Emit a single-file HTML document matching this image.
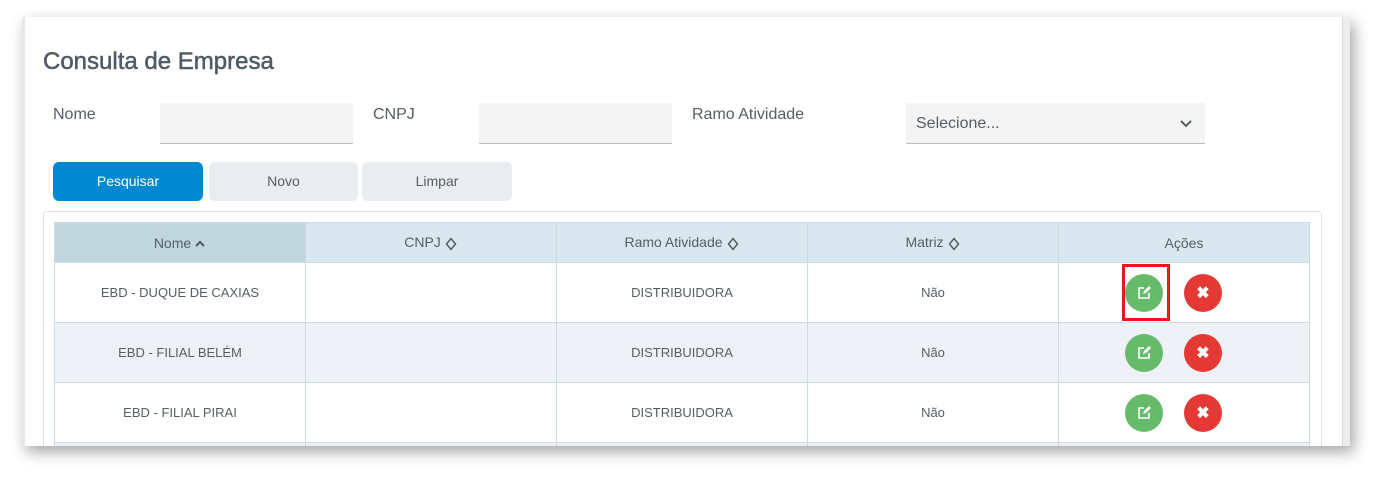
<!DOCTYPE html>
<html><head><meta charset="utf-8"><style>
*{box-sizing:border-box;margin:0;padding:0}
body{width:1399px;height:495px;background:#fff;font-family:"Liberation Sans",sans-serif;position:relative;overflow:hidden;color:#555e66}
.card{position:absolute;left:22px;top:17px;width:1328px;height:429px;background:#fff;box-shadow:4px 6px 14px rgba(0,0,0,.35);overflow:hidden}
.lstrip{position:absolute;left:0;top:0;width:3px;height:100%;background:#e8e8e8}
.rstrip{position:absolute;right:0;top:0;width:8px;height:100%;background:#ededed;border-left:1px solid #ddd}
.abs{position:absolute}
h1{position:absolute;left:21px;top:31px;font-size:24px;font-weight:normal;color:#4f5b66;-webkit-text-stroke:.5px #4f5b66}
.lbl{position:absolute;top:89px;font-size:16px;color:#555e66}
.inp{position:absolute;top:86px;height:41px;background:#f4f4f4;border-bottom:1.5px solid #b5bec6}
.btn{position:absolute;top:145px;height:39px;width:150px;border-radius:6px;background:#e9edf0;font-size:14px;text-align:center;line-height:39px;color:#555e66}
.tbox{position:absolute;left:21px;top:194px;width:1279px;height:260px;border:1px solid #e0e3e6;border-radius:3px}
table{position:absolute;left:32px;top:205px;border-collapse:collapse;table-layout:fixed;width:1256px}
td,th{border:1px solid #cddbe3;text-align:center;font-size:13px;color:#555e66;font-weight:normal}
th{height:40px;background:#d9e8f0;font-size:14px}
th.s{background:#c0d5de}
th svg{vertical-align:middle;margin-left:3px}
td{height:60px}
tr.alt td{background:#eef1f6}
.acts{display:flex;justify-content:center;margin-right:21px}
.c{display:block;width:38px;height:38px;border-radius:50%;position:relative}
.g{background:#66bb6a}.r{background:#e53935;margin-left:21px}
</style></head><body>
<div class="card">
<div class="lstrip"></div><div class="rstrip"></div>
<h1>Consulta de Empresa</h1>
<div class="lbl" style="left:31px">Nome</div>
<div class="inp" style="left:138px;width:193px"></div>
<div class="lbl" style="left:351px">CNPJ</div>
<div class="inp" style="left:457px;width:193px"></div>
<div class="lbl" style="left:670px">Ramo Atividade</div>
<div class="inp" style="left:884px;width:299px;font-size:16px;line-height:41px;padding-left:10px;color:#555e66">Selecione...
<svg class="abs" style="right:12px;top:16px" width="14" height="10" viewBox="0 0 14 10"><path d="M2 2l5 5 5-5" stroke="#555e66" stroke-width="2" fill="none"/></svg></div>
<div class="btn" style="left:31px;background:#0288d1;color:#fff">Pesquisar</div>
<div class="btn" style="left:187px;width:149px">Novo</div>
<div class="btn" style="left:340px">Limpar</div>
<div class="tbox"></div>
<table>
<tr><th class="s">Nome<svg width="12" height="10" viewBox="0 0 12 10"><path d="M2 7l4-4 4 4" stroke="#555e66" stroke-width="2.2" fill="none"/></svg></th>
<th>CNPJ<svg width="14" height="14" viewBox="0 0 14 14"><path d="M7 1.5l4.5 5.5L7 12.5 2.5 7z" stroke="#555e66" stroke-width="1.5" fill="none"/></svg></th>
<th>Ramo Atividade<svg width="14" height="14" viewBox="0 0 14 14"><path d="M7 1.5l4.5 5.5L7 12.5 2.5 7z" stroke="#555e66" stroke-width="1.5" fill="none"/></svg></th>
<th>Matriz<svg width="14" height="14" viewBox="0 0 14 14"><path d="M7 1.5l4.5 5.5L7 12.5 2.5 7z" stroke="#555e66" stroke-width="1.5" fill="none"/></svg></th><th>Ações</th></tr>
<tr><td>EBD - DUQUE DE CAXIAS</td><td></td><td>DISTRIBUIDORA</td><td>Não</td><td><div class="acts"><span class="c g"><svg class="abs" style="left:11px;top:11px" width="16" height="16" viewBox="0 0 16 16"><path d="M8 3H3v10h10V8" stroke="#fff" stroke-width="1.6" fill="none"/><path d="M7 9l1 -3 5-5 2 2-5 5z" fill="#fff"/></svg></span><span class="c r"><span class="abs" style="left:0;right:0;top:9px;color:#fff;font-weight:bold;font-size:16px">✖</span></span></div></td></tr>
<tr class="alt"><td>EBD - FILIAL BELÉM</td><td></td><td>DISTRIBUIDORA</td><td>Não</td><td><div class="acts"><span class="c g"><svg class="abs" style="left:11px;top:11px" width="16" height="16" viewBox="0 0 16 16"><path d="M8 3H3v10h10V8" stroke="#fff" stroke-width="1.6" fill="none"/><path d="M7 9l1 -3 5-5 2 2-5 5z" fill="#fff"/></svg></span><span class="c r"><span class="abs" style="left:0;right:0;top:9px;color:#fff;font-weight:bold;font-size:16px">✖</span></span></div></td></tr>
<tr><td>EBD - FILIAL PIRAI</td><td></td><td>DISTRIBUIDORA</td><td>Não</td><td><div class="acts"><span class="c g"><svg class="abs" style="left:11px;top:11px" width="16" height="16" viewBox="0 0 16 16"><path d="M8 3H3v10h10V8" stroke="#fff" stroke-width="1.6" fill="none"/><path d="M7 9l1 -3 5-5 2 2-5 5z" fill="#fff"/></svg></span><span class="c r"><span class="abs" style="left:0;right:0;top:9px;color:#fff;font-weight:bold;font-size:16px">✖</span></span></div></td></tr>
<tr class="alt"><td></td><td></td><td></td><td></td><td></td></tr>
</table>
<div class="abs" style="left:1100px;top:247px;width:48px;height:57px;border:3px solid #e8161e"></div>
</div>
</body></html>
